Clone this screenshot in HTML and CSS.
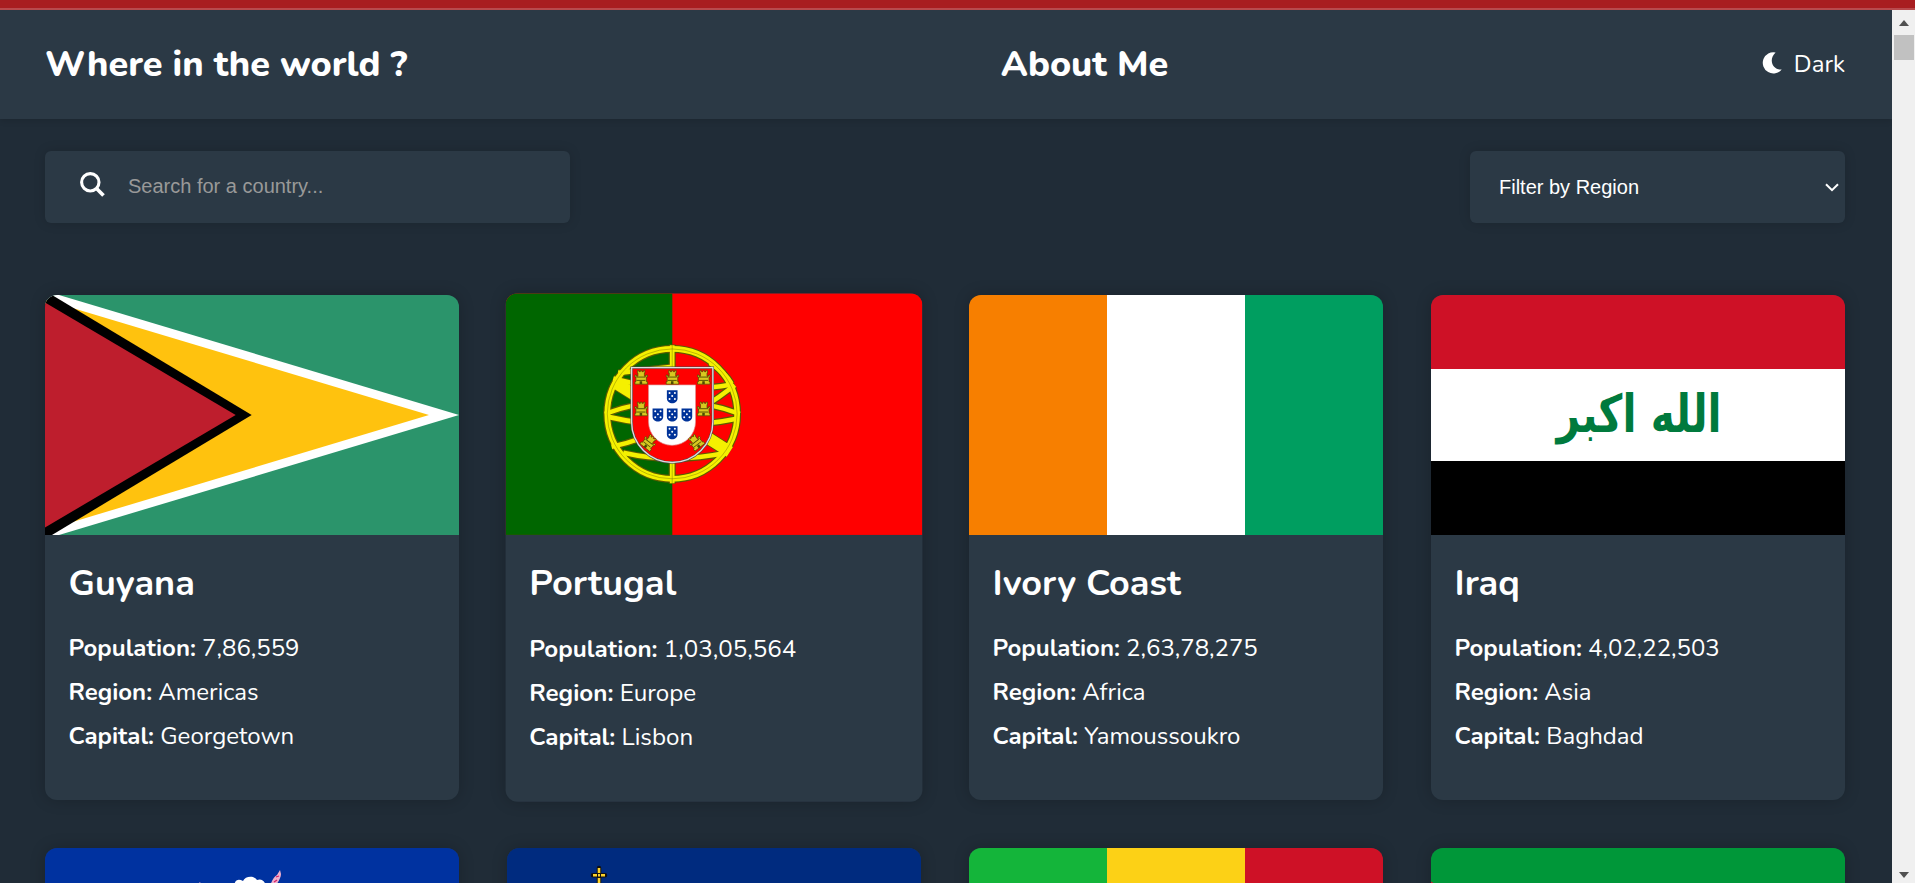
FILE: index.html
```html
<!DOCTYPE html>
<html lang="en">
<head>
<meta charset="utf-8">
<title>Where in the world ?</title>
<link rel="stylesheet" href="styles.css">
</head>
<body>
<div class="topline"></div>
<div class="frame">
  <div class="page">
    <header class="header">
      <h1 class="brand">Where in the world ?</h1>
      <h1 class="about">About Me</h1>
      <div class="theme">
        <svg class="moon" viewBox="0 0 20 22"><path d="M13.600.5A10.600 10.600 0 1 0 19.700 17.400C11.500 18.800 5.500 8 13.600.5z" fill="#fff"/></svg>
        <span class="theme-label">Dark</span>
      </div>
    </header>
    <main class="main">
      <div class="controls">
        <div class="search">
          <svg class="glass" viewBox="0 0 25 25"><circle cx="10.300" cy="10.300" r="8.700" fill="none" stroke="#fff" stroke-width="3.100"/><path d="M16.300 16.300l7.200 7.200" stroke="#fff" stroke-width="3.700"/></svg>
          <span class="placeholder">Search for a country...</span>
        </div>
        <div class="select">
          <span class="select-label">Filter by Region</span>
          <svg class="chevron" viewBox="0 0 14 9"><path d="M1 1.200l6 6 6-6" fill="none" stroke="#fff" stroke-width="2"/></svg>
        </div>
      </div>
      <div class="grid">
        <article class="card">
          <svg class="flag" viewBox="0 0 414 240">
            <rect width="414" height="240" fill="#2b946b"/>
            <path d="M0-4.200L414 120 0 244.200z" fill="#fff"/>
            <path d="M0 4.800L384 120 0 235.200z" fill="#ffc20e"/>
            <path d="M0-4.200L206.700 120 0 244.200z" fill="#000"/>
            <path d="M0 7.500L190.700 120 0 232.500z" fill="#be1e2d"/>
          </svg>
          <div class="info">
            <h2 class="name">Guyana</h2>
            <p class="row"><b>Population:</b> 7,86,559</p>
            <p class="row"><b>Region:</b> Americas</p>
            <p class="row"><b>Capital:</b> Georgetown</p>
          </div>
        </article>
        <article class="card card-hover">
          <svg class="flag" viewBox="0 0 414 240">
            <defs>
              <g id="castle"><path d="M-12 15v-6h2v-11h-2v-5h3v3h3v-8h-1v-6h3v3h3v-3h3v3h3v-3h3v6h-1v8h3v-3h3v5h-2v11h2v6z" fill="#d8c820" stroke="#4d4b00" stroke-width="1.500"/><path d="M-9 6H9M-9-2H9" stroke="#4d4b00" stroke-width="2"/><rect x="-2.500" y="8" width="5" height="7" fill="#4d4b00"/></g>
              <g id="quina"><path d="M-16-19h32v24c0 20-32 20-32 0z" fill="#003399"/><g fill="#fff"><circle cx="-8" cy="-11" r="3"/><circle cx="8" cy="-11" r="3"/><circle cy="-2" r="3"/><circle cx="-8" cy="7" r="3"/><circle cx="8" cy="7" r="3"/></g></g>
            </defs>
            <rect width="414" height="240" fill="#f00"/>
            <rect width="165.600" height="240" fill="#060"/>
            <g transform="translate(165.500 119.800) scale(.3307) translate(-277 -281)">
              <g fill="none" stroke="#5d5b00" stroke-width="21">
                <path d="M100 184L206 250M340 325L450 395" stroke-width="40"/>
                <path d="M115 158L277 140 M390 128Q435 155 455 190M460 192Q280 225 100 175M75 281Q277 205 480 281M85 290Q277 335 475 295M95 380Q277 340 465 195M130 398Q277 432 440 398"/>
                <circle cx="277" cy="281" r="195" stroke-width="24"/>
                <path d="M277 73V491"/>
              </g>
              <g fill="none" stroke="#f5f000" stroke-width="14">
                <path d="M100 184L206 250M340 325L450 395" stroke-width="35"/>
                <path d="M115 158L277 140 M390 128Q435 155 455 190M460 192Q280 225 100 175M75 281Q277 205 480 281M85 290Q277 335 475 295M95 380Q277 340 465 195M130 398Q277 432 440 398"/>
                <circle cx="277" cy="281" r="195" stroke-width="17"/>
                <path d="M277 75V489"/>
              </g>
              <circle cx="277" cy="281" r="195" fill="none" stroke="#4d4b00" stroke-width="2" opacity=".5"/>
              <path d="M277 75V489" stroke="#4d4b00" stroke-width="2" opacity=".5"/>
              <path d="M155 142H399V305A122 122 0 0 1 155 305z" fill="#f00" stroke="#4d4b4b" stroke-width="7"/>
              <path d="M155 142H399V305A122 122 0 0 1 155 305z" fill="none" stroke="#ddd" stroke-width="4"/>
              <path d="M206 194H347V305A70.500 70.500 0 0 1 206 305z" fill="#fff" stroke="#d99" stroke-width="2"/>
              <use href="#quina" x="277" y="229"/><use href="#quina" x="234" y="284"/><use href="#quina" x="277" y="284"/><use href="#quina" x="321" y="284"/><use href="#quina" x="277" y="337"/>
              <use href="#castle" transform="translate(183 173) scale(1.500 1.250)"/><use href="#castle" transform="translate(277 173) scale(1.500 1.250)"/><use href="#castle" transform="translate(371 173) scale(1.500 1.250)"/><use href="#castle" transform="translate(183 268) scale(1.500 1.250)"/><use href="#castle" transform="translate(371 268) scale(1.500 1.250)"/><use href="#castle" transform="translate(206 367) rotate(38) scale(1.500 1.250)"/><use href="#castle" transform="translate(348 367) rotate(-38) scale(1.500 1.250)"/>
            </g>
          </svg>
          <div class="info">
            <h2 class="name">Portugal</h2>
            <p class="row"><b>Population:</b> 1,03,05,564</p>
            <p class="row"><b>Region:</b> Europe</p>
            <p class="row"><b>Capital:</b> Lisbon</p>
          </div>
        </article>
        <article class="card">
          <svg class="flag" viewBox="0 0 414 240" shape-rendering="crispEdges"><rect width="138" height="240" fill="#f77f00"/><rect x="138" width="138" height="240" fill="#fff"/><rect x="276" width="138" height="240" fill="#009e60"/></svg>
          <div class="info">
            <h2 class="name">Ivory Coast</h2>
            <p class="row"><b>Population:</b> 2,63,78,275</p>
            <p class="row"><b>Region:</b> Africa</p>
            <p class="row"><b>Capital:</b> Yamoussoukro</p>
          </div>
        </article>
        <article class="card">
          <svg class="flag" viewBox="0 0 414 240"><rect width="414" height="74" fill="#ce1126"/><rect y="74" width="414" height="92" fill="#fff"/><rect y="166" width="414" height="74"/><text class="takbir" x="208" y="137" text-anchor="middle" textLength="165" lengthAdjust="spacingAndGlyphs">الله اكبر</text></svg>
          <div class="info">
            <h2 class="name">Iraq</h2>
            <p class="row"><b>Population:</b> 4,02,22,503</p>
            <p class="row"><b>Region:</b> Asia</p>
            <p class="row"><b>Capital:</b> Baghdad</p>
          </div>
        </article>
        <article class="card">
          <svg class="flag" viewBox="0 0 414 240"><rect width="414" height="240" fill="#0032a0"/><path d="M189 40c0-8 4-10 9-7 2-5 11-6 14-1 5-2 9 2 9 8z" fill="#fff"/><path d="M225 38c2-6 4-9 7-11l3-5 1 4c0 4-3 8-6 13z" fill="#f0b0cc"/><path d="M229 34l3-2M231 29l3-1M227 36l3 1" stroke="#d6206a" stroke-width="1.300"/><path d="M153 36l2-2 1 2z" fill="#f4a6c6"/></svg>
          <div class="info"></div>
        </article>
        <article class="card">
          <svg class="flag" viewBox="0 0 414 240"><rect width="414" height="240" fill="#002b7f"/><path d="M92 20v16M86 27.300h12" stroke="#111" stroke-width="4.500" stroke-linecap="round"/><path d="M92 20v5M92 30v6M86 27.300h4M94 27.300h4M91 27.300h2" stroke="#fcd22a" stroke-width="2.600"/></svg>
          <div class="info"></div>
        </article>
        <article class="card">
          <svg class="flag" viewBox="0 0 414 240" shape-rendering="crispEdges"><rect width="138" height="240" fill="#14b53a"/><rect x="138" width="138" height="240" fill="#fcd116"/><rect x="276" width="138" height="240" fill="#ce1126"/></svg>
          <div class="info"></div>
        </article>
        <article class="card">
          <svg class="flag" viewBox="0 0 414 240"><rect width="414" height="240" fill="#009739"/><path d="M0 33.500L350 240H0z" fill="#ce1126"/></svg>
          <div class="info"></div>
        </article>
      </div>
    </main>
  </div>
  <aside class="scrollbar">
    <svg class="arrow" viewBox="0 0 10 6"><path d="M0 6l5-6 5 6z" fill="#505050"/></svg>
    <div class="thumb"></div>
    <svg class="arrow arrow-down" viewBox="0 0 10 6"><path d="M0 0l5 6 5-6z" fill="#505050"/></svg>
  </aside>
</div>
</body>
</html>
```
FILE: styles.css
```css
* { box-sizing: border-box; }
body {
  margin: 0;
  height: 883px;
  overflow: hidden;
  background: #202c37;
  color: #fff;
  font-family: Nunito, Lato, sans-serif;
}
h1, h2, p { margin: 0; }
svg { display: block; }
.topline { height: 10px; background: #a81d20; border-bottom: 2px solid #b84a4d; }
.frame { display: flex; height: 873px; }
.page { flex: 1; overflow: hidden; }
.header {
  height: 109px;
  padding: 0 47px 1px 45px;
  display: flex;
  justify-content: space-between;
  align-items: center;
  background: #2b3945;
  box-shadow: 0 2px 6px rgba(0, 0, 0, .12);
}
.brand, .about { font-size: 36px; font-weight: 800; line-height: 49px; white-space: nowrap; }
.theme { display: flex; align-items: center; gap: 12px; }
.moon { width: 20px; height: 22px; margin-bottom: 2px; }
.theme-label { font-size: 24px; line-height: 33px; }
.main { padding: 32px 47px 0 45px; }
.controls { display: flex; justify-content: space-between; }
.search, .select {
  height: 72px;
  background: #2b3945;
  border-radius: 6px;
  box-shadow: 0 0 12px rgba(0, 0, 0, .15);
  font: 20px "Liberation Sans", Arial, sans-serif;
  display: flex;
  align-items: center;
}
.search { width: 525px; padding-left: 35px; gap: 23px; }
.glass { width: 25px; height: 25px; margin-bottom: 5px; }
.placeholder { color: #999; margin-bottom: 2px; }
.select { width: 375px; padding: 0 6px 0 29px; justify-content: space-between; }
.chevron { width: 14px; height: 9px; }
.grid {
  margin-top: 72px;
  display: grid;
  grid-template-columns: repeat(4, 414px);
  grid-auto-rows: 505px;
  gap: 48px;
}
.card {
  background: #2b3945;
  border-radius: 12px;
  overflow: hidden;
  box-shadow: 0 0 16px rgba(0, 0, 0, .2);
}
.card-hover { transform: scale(1.007); }
.flag { width: 414px; height: 240px; }
.takbir { font: bold 52px "DejaVu Sans", sans-serif; fill: #007a3d; }
.info { padding: 24px 23.5px; }
.name { font-size: 36px; font-weight: 700; line-height: 49px; margin-bottom: 24px; }
.row { font-size: 24px; line-height: 33px; margin-bottom: 11px; }
.row b { font-weight: 700; }
.scrollbar {
  width: 23px;
  background: #f0f0f0;
  display: flex;
  flex-direction: column;
  align-items: center;
  padding: 10px 0 5px;
}
.arrow { width: 10px; height: 6px; }
.thumb { width: 20px; height: 25px; margin-top: 9px; background: #c1c1c1; }
.arrow-down { margin-top: auto; }
```
